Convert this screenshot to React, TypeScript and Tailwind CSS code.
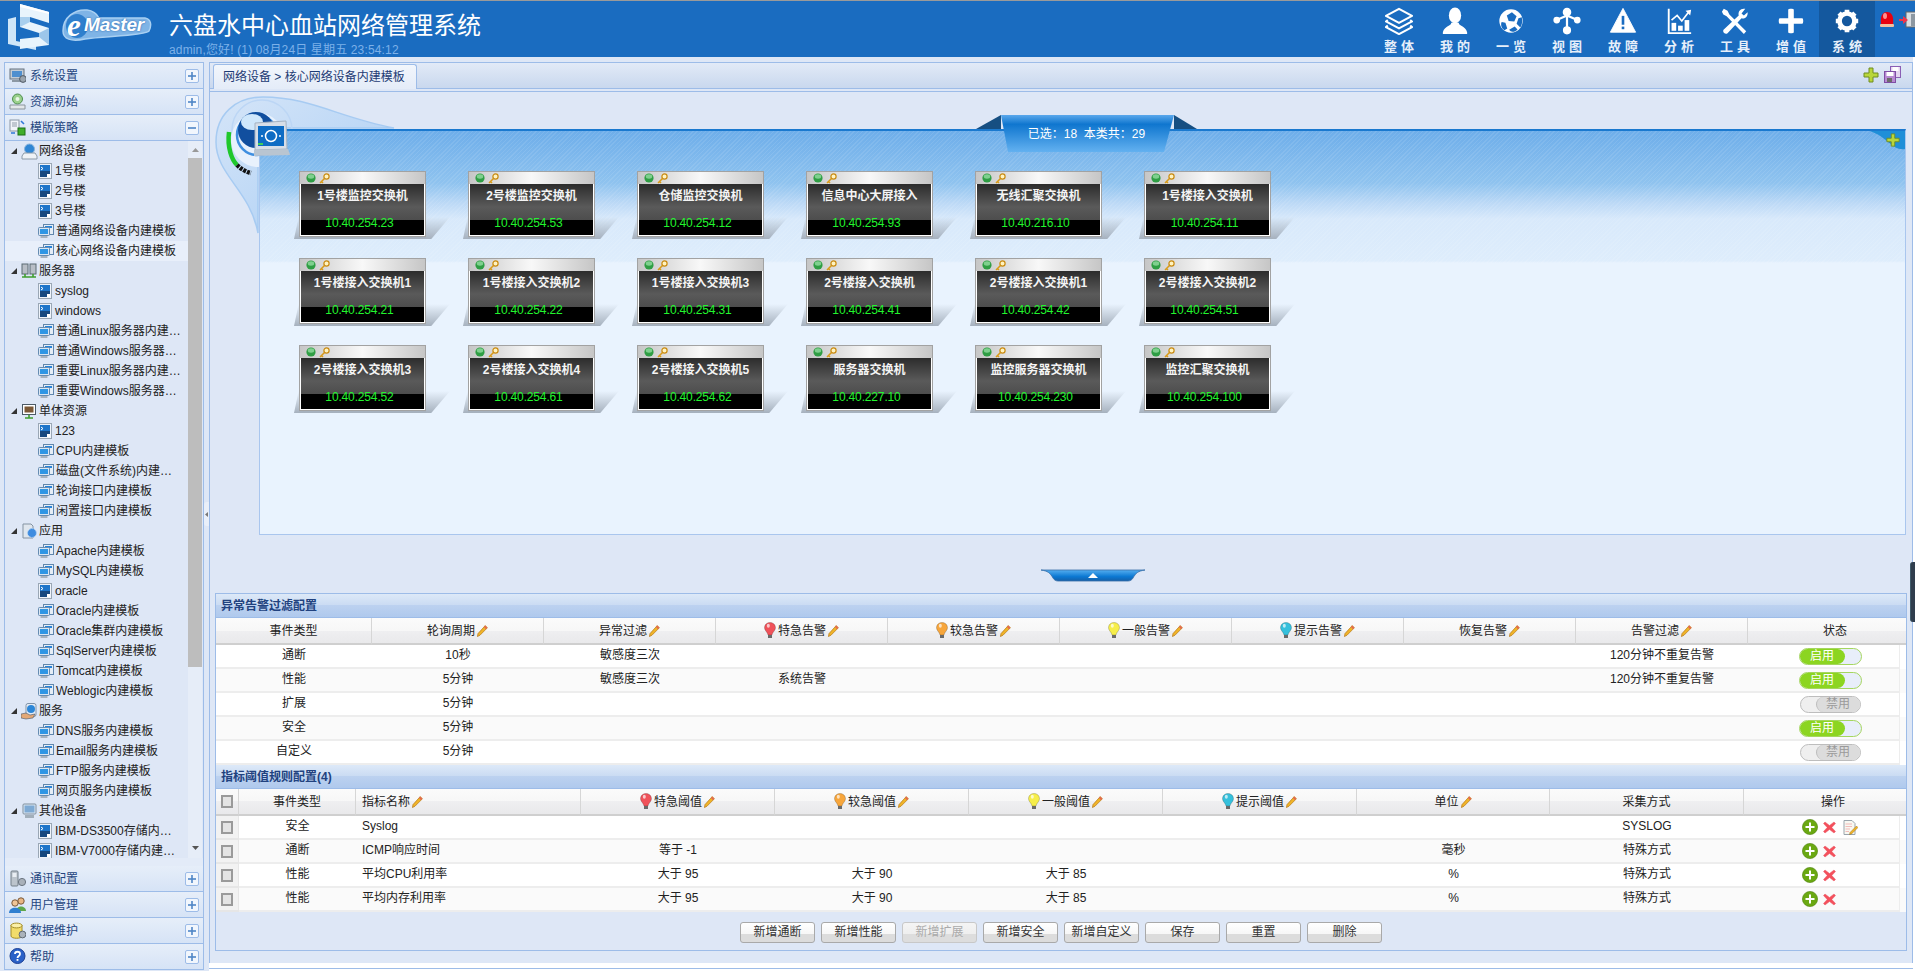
import React from "react";

const bd = "border-[#9dbce8]";

function Logo() {
  return (
    <svg width="44" height="48" viewBox="0 0 44 48" className="shrink-0">
      <path d="M0 16 L8 14 L8 38 L28 42 L28 47 L0 41 Z" fill="#cfe6f8" />
      <path d="M12 1 L41 9 L41 20 L22 14 L22 19 L41 25 L41 42 L12 46 L12 36 L31 34 L31 30 L12 24 Z" fill="#e8f4fc" />
      <path d="M12 1 L41 9 L41 11 L12 4 Z" fill="#ffffff" />
      <path d="M22 14 L22 19 L12 24 L12 14 Z" fill="#a8cfee" />
      <path d="M31 30 L41 25 L41 42 L31 34 Z" fill="#9cc6ea" />
    </svg>
  );
}

function EMaster() {
  return (
    <div className="relative w-[91px] h-[33px] ml-[9px] shrink-0 flex items-center">
      <svg width="91" height="33" viewBox="0 0 91 33" className="absolute left-0 top-0">
        <path d="M2 22 C2 8 14 0 26 1 C34 2 37 7 38 9 L84 9 C90 10 91 16 88 22 C84 27 40 27 24 30 C10 33 2 30 2 22 Z" fill="#7fb4e6" stroke="#a9d0f2" strokeWidth="1.5" />
        <ellipse cx="16" cy="17" rx="11" ry="12" fill="#2f7fcd" />
      </svg>
      <span className="relative font-['Liberation_Serif','Noto_Serif',serif] italic font-bold text-[31px] leading-[33px] text-white ml-[6px] w-[17px]">e</span>
      <span className="relative font-['Liberation_Sans',sans-serif] italic font-bold text-[19px] leading-[33px] text-white tracking-[-0.2px] mt-[-2px] [text-shadow:0_0_2px_#1d5fa8]">Master</span>
    </div>
  );
}

const navIcons: Record<string, React.ReactNode> = {
  layers: (
    <g fill="none" stroke="#fff" strokeWidth="2.2" strokeLinejoin="round">
      <path d="M15 2 L29 9.5 L15 17 L1 9.5 Z" />
      <path d="M3 14 L1 15.5 L15 23 L29 15.5 L27 14" />
      <path d="M3 20 L1 21.5 L15 29 L29 21.5 L27 20" />
    </g>
  ),
  user: (
    <g fill="#fff">
      <ellipse cx="15" cy="9" rx="6.6" ry="8.4" />
      <path d="M11 17 C11 21 4 20 2 27 L2 29 L28 29 L28 27 C26 20 19 21 19 17 Z" />
    </g>
  ),
  ball: (
    <g>
      <circle cx="15" cy="15" r="12.5" fill="#fff" />
      <g fill="#1a6cc0">
        <path d="M10.5 9 L16 5.5 L21 10 L18.5 15.5 L12.5 15 Z" />
        <path d="M5 16 L9 17 L11 23 L8 25 C5 23 3.5 19 5 16 Z" />
        <path d="M23 12 L26.5 11 C27.5 15 27 19 25 22 L21 18 Z" />
        <path d="M13 24.5 L19 21 L22 24 C19 27 15 27.5 13 24.5 Z" />
      </g>
    </g>
  ),
  graph: (
    <g stroke="#fff" strokeWidth="2.4" fill="#fff">
      <path d="M15 5 L15 26 M15 9 L4 14 M15 9 L26 14" fill="none" />
      <circle cx="15" cy="5.5" r="3.4" />
      <circle cx="15" cy="25" r="3.2" />
      <circle cx="4" cy="14" r="2.4" />
      <circle cx="26" cy="14" r="2.4" />
    </g>
  ),
  warn: (
    <g>
      <path d="M15 1.5 L28.5 27 L1.5 27 Z" fill="#fff" stroke="#fff" strokeLinejoin="round" />
      <rect x="13.6" y="9.5" width="2.8" height="9.5" fill="#1a6cc0" />
      <rect x="13.6" y="21" width="2.8" height="2.8" fill="#1a6cc0" />
    </g>
  ),
  chart: (
    <g fill="#fff">
      <path d="M3 2 L5 2 L5 27 L28 27 L28 29 L3 29 Z" />
      <rect x="7" y="17" width="5" height="8.5" />
      <rect x="14" y="20" width="5" height="5.5" />
      <rect x="21" y="14" width="5" height="11.5" />
      <path d="M7 14 L13 9 L18 15 L25 6" fill="none" stroke="#fff" strokeWidth="1.8" />
      <path d="M22 4 L28 3 L27 9 Z" />
    </g>
  ),
  tools: (
    <g fill="#fff">
      <path d="M3 2 L7 4 L9 8 L27 26 L24.5 29 L6 10 L2.5 8 L1 5 Z" />
      <path d="M26 2 C21 1 18 5 19 9 L3 24 C1 26 4 30 7 28 L22 12 C26 13 29 10 28.5 5.5 L24.5 9 L22 7 Z" />
    </g>
  ),
  plus: <path d="M12 3 C12 1.5 18 1.5 18 3 L18 12 L27 12 C28.5 12 28.5 18 27 18 L18 18 L18 27 C18 28.5 12 28.5 12 27 L12 18 L3 18 C1.5 18 1.5 12 3 12 L12 12 Z" fill="#fff" />,
  gear: (
    <g>
      <circle cx="15" cy="15" r="8" fill="none" stroke="#fff" strokeWidth="5" />
      <g stroke="#fff" strokeWidth="5">
        <path d="M15 3 L15 7 M15 23 L15 27 M3 15 L7 15 M23 15 L27 15 M6.5 6.5 L9.3 9.3 M20.7 20.7 L23.5 23.5 M6.5 23.5 L9.3 20.7 M20.7 9.3 L23.5 6.5" />
      </g>
    </g>
  ),
};

const nav = [
  ["layers", "整体"], ["user", "我的"], ["ball", "一览"], ["graph", "视图"], ["warn", "故障"],
  ["chart", "分析"], ["tools", "工具"], ["plus", "增值"], ["gear", "系统"],
];

function Header() {
  return (
    <header className="h-[57px] shrink-0 bg-[#1a6cc0] border-t border-[#9a9a9a] flex items-start overflow-hidden">
      <div className="pl-[8px] pt-[2px] flex items-start w-[1371px] shrink-0">
        <Logo />
        <div className="mt-[6px]"><EMaster /></div>
        <div className="ml-[17px] flex flex-col">
          <div className="text-[24px] leading-[30px] mt-[8px] text-white">六盘水中心血站网络管理系统</div>
          <div className="text-[12px] leading-[14px] mt-[2px] tracking-[0.15px] text-[#7db1e9] whitespace-nowrap">admin,您好! (1) 08月24日 星期五 23:54:12</div>
        </div>
      </div>
      {nav.map(([icon, label]) => (
        <div key={label} className={label === "系统" ? "w-[56px] h-[56px] shrink-0 flex flex-col items-center bg-[#14589e]" : "w-[56px] h-[56px] shrink-0 flex flex-col items-center"}>
          <svg width="28" height="28" viewBox="0 0 30 30" className="mt-[6px]">{navIcons[icon]}</svg>
          <span className="text-[13px] leading-[14px] mt-[5px] font-bold tracking-[4px] pl-[4px] text-[#e6effa] whitespace-nowrap">{label}</span>
        </div>
      ))}
      <div className="flex items-start pl-[4px] pt-[10px] shrink-0">
        <svg width="16" height="17" viewBox="0 0 16 17" className="shrink-0">
          <path d="M2 13 C1 4 4 1 8 1 C12 1 15 4 14 13 Z" fill="#e8000f" />
          <ellipse cx="6" cy="5" rx="2" ry="3" fill="#ff8f8f" />
          <rect x="1" y="13" width="14" height="3" rx="1" fill="#f3c0a0" />
        </svg>
        <svg width="22" height="17" viewBox="0 0 22 17" className="ml-[3px] shrink-0">
          <rect x="8" y="1" width="13" height="15" fill="#d8dde2" stroke="#666" />
          <rect x="13" y="3" width="5" height="12" fill="#8d98a2" />
          <path d="M1 8 L5 8 L5 5 L10 9 L5 13 L5 10 L1 10 Z" fill="#f0344a" />
        </svg>
      </div>
    </header>
  );
}

function Template() {
  return (
    <svg width="14" height="16" viewBox="0 0 14 16" className="shrink-0">
      <rect x="0.5" y="0.5" width="13" height="15" fill="#eef3fa" stroke="#9aa7b5" />
      <rect x="2" y="2" width="10" height="12" fill="#1d74c9" />
      <rect x="2" y="8" width="10" height="6" fill="#16487f" />
      <path d="M3 4 L5 5.5 L3 7" stroke="#fff" fill="none" />
      <rect x="9" y="11" width="3" height="3" fill="#fff" />
    </svg>
  );
}

function Monitor() {
  return (
    <svg width="16" height="15" viewBox="0 0 16 15" className="shrink-0">
      <rect x="5.5" y="0.5" width="10" height="10" fill="#e5edf6" stroke="#5f86ad" />
      <rect x="7" y="2" width="7" height="2" fill="#2a83d8" />
      <rect x="0.5" y="3.5" width="11" height="8" rx="1" fill="#dbe6f2" stroke="#668cb2" />
      <rect x="2" y="5" width="8" height="5" fill="#2f96e4" />
      <rect x="2.5" y="12" width="7" height="2" fill="#a7b3bf" />
    </svg>
  );
}

const groupIcons: Record<string, React.ReactNode> = {
  net: (
    <g>
      <circle cx="8.5" cy="6" r="5" fill="#2f86d4" stroke="#88b3dc" />
      <path d="M1 13 L3 10 L14 10 L16 13 L16 16 L1 16 Z" fill="#eef2f6" stroke="#8a9aa8" />
    </g>
  ),
  server: (
    <g>
      <rect x="1" y="1" width="6" height="10" fill="#b8bec6" stroke="#5a6a72" />
      <rect x="9" y="1" width="6" height="10" fill="#b8bec6" stroke="#5a6a72" />
      <path d="M4 11 L4 14 M12 11 L12 14 M1 14 L15 14" stroke="#3f9f2f" strokeWidth="1.6" />
    </g>
  ),
  single: (
    <g>
      <rect x="1.5" y="1.5" width="13" height="10" fill="#fff" stroke="#4c5a66" />
      <rect x="3.5" y="3.5" width="9" height="6" fill="#7b5836" />
      <path d="M8 12 L8 15 M4 15 L12 15" stroke="#3f9f2f" strokeWidth="1.6" />
    </g>
  ),
  app: (
    <g>
      <path d="M2 1 L10 1 L12 3 L12 15 L2 15 Z" fill="#dfe6ee" stroke="#8593a2" />
      <circle cx="11" cy="10" r="4.4" fill="#3f8ce0" stroke="#a6cdf4" strokeDasharray="1.5 1" />
    </g>
  ),
  service: (
    <g>
      <rect x="5" y="0.5" width="10" height="13" rx="2" fill="#e5ecf5" stroke="#8093a8" />
      <circle cx="10" cy="6" r="4" fill="#2c87d8" />
      <path d="M0 11 L5 10 L9 12 L14 11 L12 15 L5 16 L0 15 Z" fill="#e3a876" stroke="#27405f" strokeWidth="0.5" />
    </g>
  ),
  other: (
    <g>
      <rect x="2" y="1" width="13" height="10" rx="1" fill="#dbe6f2" stroke="#7f8f9e" />
      <rect x="3.5" y="2.5" width="10" height="7" fill="#7eaad4" />
      <rect x="4" y="12" width="9" height="3" fill="#a2afbb" />
    </g>
  ),
};

type TreeItem = [string, "g" | "t" | "m", string?];
const tree: TreeItem[] = [
  ["网络设备", "g", "net"], ["1号楼", "t"], ["2号楼", "t"], ["3号楼", "t"], ["普通网络设备内建模板", "m"], ["核心网络设备内建模板", "m"],
  ["服务器", "g", "server"], ["syslog", "t"], ["windows", "t"], ["普通Linux服务器内建…", "m"], ["普通Windows服务器…", "m"], ["重要Linux服务器内建…", "m"], ["重要Windows服务器…", "m"],
  ["单体资源", "g", "single"], ["123", "t"], ["CPU内建模板", "m"], ["磁盘(文件系统)内建…", "m"], ["轮询接口内建模板", "m"], ["闲置接口内建模板", "m"],
  ["应用", "g", "app"], ["Apache内建模板", "m"], ["MySQL内建模板", "m"], ["oracle", "t"], ["Oracle内建模板", "m"], ["Oracle集群内建模板", "m"], ["SqlServer内建模板", "m"], ["Tomcat内建模板", "m"], ["Weblogic内建模板", "m"],
  ["服务", "g", "service"], ["DNS服务内建模板", "m"], ["Email服务内建模板", "m"], ["FTP服务内建模板", "m"], ["网页服务内建模板", "m"],
  ["其他设备", "g", "other"], ["IBM-DS3500存储内…", "t"], ["IBM-V7000存储内建…", "t"],
];

const accIcons: Record<string, React.ReactNode> = {
  sys: (<g><rect x="1" y="2" width="14" height="10" fill="#c3ccd6" stroke="#66727e" /><rect x="3" y="4" width="10" height="6" fill="#4f8fcf" /><rect x="3" y="13" width="10" height="2" fill="#8c98a4" /><circle cx="14" cy="12" r="3.4" fill="#9aa4ae" stroke="#4f5a66" /></g>),
  init: (<g><circle cx="8.5" cy="6" r="5" fill="#9ad08c" stroke="#4f8f4f" /><circle cx="8.5" cy="6" r="2" fill="#eaf6e6" /><path d="M1 12 L16 12 L16 16 L1 16 Z" fill="#e3e7ea" stroke="#8a949c" /></g>),
  tpl: (<g><rect x="1" y="1" width="9" height="11" fill="#f1f4f8" stroke="#8b98a5" /><rect x="3" y="3" width="5" height="5" fill="#c1c8d0" /><rect x="9" y="9" width="7" height="7" fill="#3fae2a" stroke="#1c6f17" /><path d="M2 14 L6 14 M12 2 L15 5" stroke="#2f78d8" strokeWidth="1.6" /></g>),
  comm: (<g><rect x="2" y="1" width="7" height="15" rx="1" fill="#bcc4cc" stroke="#75808a" /><rect x="3.5" y="3" width="4" height="4" fill="#e9eef3" /><circle cx="13" cy="12" r="3.6" fill="#a9b1ba" stroke="#6b7580" /></g>),
  user: (<g><circle cx="12" cy="5" r="3.2" fill="#e8b683" stroke="#7b5a3a" /><path d="M7 15 C7 9 17 9 17 15 Z" fill="#5ea84a" /><circle cx="6" cy="7" r="3.2" fill="#f0c596" stroke="#7b5a3a" /><path d="M0 17 C0 10 12 10 12 17 Z" fill="#2f7fd0" /></g>),
  data: (<g><path d="M2 3 L2 14 C2 17 13 17 13 14 L13 3 Z" fill="#f2dc6a" stroke="#a48e2a" /><ellipse cx="7.5" cy="3.5" rx="5.5" ry="2.4" fill="#fbf0a8" stroke="#a48e2a" /><circle cx="13.5" cy="12.5" r="3.4" fill="#aab2ba" stroke="#626c76" /></g>),
  help: (<g><circle cx="8.5" cy="8" r="7.5" fill="#2a61c8" stroke="#1b3f93" /><path d="M6 6 C6 3 11 3 11 6 C11 8 8.5 8 8.5 10" stroke="#fff" strokeWidth="1.8" fill="none" /><rect x="7.6" y="11" width="1.8" height="1.8" fill="#fff" /></g>),
};

function AccBtn({ minus }: { minus?: boolean }) {
  return (
    <div className={"w-[14px] h-[14px] rounded-[2px] border " + bd + " bg-[#f1f6fd] flex items-center justify-center"}>
      <svg width="8" height="8" viewBox="0 0 8 8">
        <rect x="0" y="3.2" width="8" height="1.6" fill="#4f86c6" />
        {!minus && <rect x="3.2" y="0" width="1.6" height="8" fill="#4f86c6" />}
      </svg>
    </div>
  );
}

function AccHead({ icon, label, minus }: { icon: string; label: string; minus?: boolean }) {
  return (
    <div className={"h-[26px] shrink-0 flex items-center pl-[4px] pr-[4px] border-b " + bd + " bg-[linear-gradient(#e6eef9,#d6e3f6)]"}>
      <svg width="17" height="17" viewBox="0 0 17 17" className="shrink-0">{accIcons[icon]}</svg>
      <span className="ml-[4px] text-[12px] text-[#254680] flex-1">{label}</span>
      <AccBtn minus={minus} />
    </div>
  );
}

function Sidebar() {
  return (
    <aside className="w-[200px] ml-[4px] mt-[5px] h-[907px] shrink-0 flex flex-col">
      <div className={"border-x border-t " + bd + " flex flex-col"}>
        <AccHead icon="sys" label="系统设置" />
        <AccHead icon="init" label="资源初始" />
        <AccHead icon="tpl" label="模版策略" minus />
      </div>
      <div className={"h-[717px] shrink-0 border-x " + bd + " flex overflow-hidden"}>
        <div className="w-[183px] shrink-0">
          {tree.map(([name, kind, g]) => (
            <div key={name} className={name === "核心网络设备内建模板" ? "h-[20px] flex items-center bg-[#e8effa] pl-[33px]" : kind === "g" ? "h-[20px] flex items-center pl-[6px]" : "h-[20px] flex items-center pl-[33px]"}>
              {kind === "g" && (
                <>
                  <svg width="6" height="6" viewBox="0 0 6 6" className="shrink-0"><path d="M6 0 L6 6 L0 6 Z" fill="#333" /></svg>
                  <svg width="17" height="17" viewBox="0 0 17 17" className="ml-[4px] shrink-0">{groupIcons[g as string]}</svg>
                </>
              )}
              {kind === "t" && <Template />}
              {kind === "m" && <Monitor />}
              <span className={kind === "g" ? "ml-[1px] text-[12px] text-[#222] whitespace-nowrap" : kind === "t" ? "ml-[3px] text-[12px] text-[#222] whitespace-nowrap" : "ml-[2px] text-[12px] text-[#222] whitespace-nowrap"}>{name}</span>
            </div>
          ))}
        </div>
        <div className="w-[14px] shrink-0 flex flex-col bg-[#e6edf8]">
          <div className="h-[17px] flex items-center justify-center">
            <svg width="7" height="4" viewBox="0 0 7 4"><path d="M0 4 L3.5 0 L7 4 Z" fill="#999" /></svg>
          </div>
          <div className="h-[509px] bg-[#bdbdbd]" />
          <div className="flex-1 flex items-end justify-center pb-[8px]">
            <svg width="7" height="4" viewBox="0 0 7 4"><path d="M0 0 L3.5 4 L7 0 Z" fill="#555" /></svg>
          </div>
        </div>
      </div>
      <div className={"h-[8px] shrink-0 border-x " + bd + " bg-[#e3ebf8]"} />
      <div className={"border-x " + bd + " flex flex-col"}>
        <AccHead icon="comm" label="通讯配置" />
        <AccHead icon="user" label="用户管理" />
        <AccHead icon="data" label="数据维护" />
        <AccHead icon="help" label="帮助" />
      </div>
    </aside>
  );
}

function Dot() {
  return (
    <svg width="10" height="10" viewBox="0 0 10 10" className="shrink-0">
      <circle cx="5" cy="5" r="4.6" fill="#2f9e44" />
      <ellipse cx="5" cy="3.5" rx="3.2" ry="2.2" fill="#7fd08e" />
    </svg>
  );
}

function Key() {
  return (
    <svg width="11" height="11" viewBox="0 0 11 11" className="shrink-0 ml-[3px]">
      <circle cx="7.5" cy="3.5" r="2.6" fill="#fff3c0" stroke="#c98a10" strokeWidth="1.2" />
      <path d="M5.5 5.5 L1 10 M2.5 8.5 L4 10" stroke="#d89a18" strokeWidth="1.5" />
    </svg>
  );
}

const devices = [
  ["1号楼监控交换机", "10.40.254.23"], ["2号楼监控交换机", "10.40.254.53"], ["仓储监控交换机", "10.40.254.12"], ["信息中心大屏接入", "10.40.254.93"], ["无线汇聚交换机", "10.40.216.10"], ["1号楼接入交换机", "10.40.254.11"],
  ["1号楼接入交换机1", "10.40.254.21"], ["1号楼接入交换机2", "10.40.254.22"], ["1号楼接入交换机3", "10.40.254.31"], ["2号楼接入交换机", "10.40.254.41"], ["2号楼接入交换机1", "10.40.254.42"], ["2号楼接入交换机2", "10.40.254.51"],
  ["2号楼接入交换机3", "10.40.254.52"], ["2号楼接入交换机4", "10.40.254.61"], ["2号楼接入交换机5", "10.40.254.62"], ["服务器交换机", "10.40.227.10"], ["监控服务器交换机", "10.40.254.230"], ["监控汇聚交换机", "10.40.254.100"],
];

function Card({ name, ip }: { name: string; ip: string }) {
  return (
    <div className="relative w-[127px] h-[68px]">
      <div className="absolute left-[-5px] right-[-24px] top-[46px] bottom-0 bg-[linear-gradient(to_bottom,rgba(150,165,185,0),#a6b1be)] [clip-path:polygon(0_100%,3%_0,100%_0,88%_100%)]" />
      <div className="relative h-[66px] border border-[#a2a2a2] bg-white flex flex-col">
        <div className="h-[12px] shrink-0 bg-[linear-gradient(to_right,#c6c6c6,#f8f8f8_50%,#c6c6c6)] flex items-center pl-[6px]">
          <Dot />
          <Key />
        </div>
        <div className="mx-[1px] h-[51px] shrink-0 bg-[linear-gradient(#2c2c2c,#5a5a5a_45%,#3e3e3e)] flex flex-col items-center">
          <div className="h-[36px] w-full shrink-0 pt-[4px] text-center text-[12px] leading-[16px] font-bold text-[#f4f4f4]">{name}</div>
          <div className="h-[15px] w-full shrink-0 bg-[#000] text-center">
            <span className="block -mt-[3px] pr-[6px] text-[12px] leading-[12px] tracking-[-0.15px] text-[#22f52e]">{ip}</span>
          </div>
        </div>
      </div>
      <div className="h-[2px] bg-[#a9b0b8]" />
    </div>
  );
}

function Swoosh() {
  return (
    <svg width="190" height="145" viewBox="215 95 190 145" className="absolute left-[6px] top-[38px]">
      <defs>
        <linearGradient id="sw" x1="0" y1="0" x2="1" y2="1">
          <stop offset="0" stopColor="#d5e5f8" />
          <stop offset="1" stopColor="#a9cdf4" />
        </linearGradient>
      </defs>
      <path d="M394 128 C 340 118, 310 97, 263 97 C 235 97, 216 115, 216 142 C 216 175, 250 190, 258 233 L 258 128 Z" fill="url(#sw)" stroke="#a7cbf2" strokeWidth="1.5" />
      <circle cx="262" cy="130" r="30" fill="none" stroke="#bcd6f5" strokeWidth="1.5" />
      <circle cx="258" cy="140" r="27" fill="#e8f1fc" />
    </svg>
  );
}

function Globe() {
  return (
    <svg width="85" height="85" viewBox="215 100 85 85" className="absolute left-[6px] top-[43px]">
      <circle cx="257" cy="135" r="20" fill="none" stroke="#3f8fe0" strokeWidth="2.5" />
      <circle cx="256" cy="130" r="18" fill="#114f9f" />
      <ellipse cx="252" cy="122" rx="11" ry="8" fill="#cfe7fb" />
      <path d="M229 132 C 227 148, 232 160, 237 165" stroke="#1fc82c" strokeWidth="4.5" fill="none" />
      <path d="M237 165 C 241 169, 246 172, 251 173" stroke="#111" strokeWidth="4.5" fill="none" strokeDasharray="3 1" />
      <g>
        <path d="M255 123 L286 121 L287 149 L255 150 Z" fill="#d6dee8" stroke="#a3b2c2" />
        <rect x="258" y="126" width="26" height="20" fill="#0e6cc4" />
        <circle cx="271" cy="136" r="5.5" fill="none" stroke="#fff" strokeWidth="1.5" />
        <circle cx="262" cy="136" r="1" fill="#fff" />
        <circle cx="280" cy="136" r="1" fill="#fff" />
        <rect x="258" y="143" width="5" height="2" fill="#3fcf5a" />
        <path d="M254 150 L288 149 L290 155 L254 156 Z" fill="#b9c5d1" />
      </g>
    </svg>
  );
}

function GreenPlus({ size = 14 }: { size?: number }) {
  return (
    <svg width={size} height={size} viewBox="0 0 16 16" className="shrink-0">
      <path d="M6 1 L10 1 L10 6 L15 6 L15 10 L10 10 L10 15 L6 15 L6 10 L1 10 L1 6 L6 6 Z" fill="#b9d63a" stroke="#6e8c22" strokeWidth="1" />
    </svg>
  );
}

function Canvas() {
  return (
    <div className="relative ml-[49px] mr-[6px] mt-[37px] h-[406px] border border-[#a9c6ee] border-t-2 border-t-[#1a79cf] bg-[repeating-linear-gradient(135deg,rgba(255,255,255,0.09)_0_1px,transparent_1px_3px),linear-gradient(#6eaeea_0,#8fc3ef_52px,#bcd9f6_72px,#d8e9fb_88px,#deedfc_130px,#e9f3fe_132px,#e9f3fe_100%)] bg-no-repeat [background-size:100%_132px,100%_100%]">
      <div className="absolute left-[716px] top-[-16px] w-[221px] h-[38px]">
        <svg width="221" height="38" viewBox="0 0 221 38" className="absolute left-0 top-0">
          <defs>
            <linearGradient id="bn" x1="0" y1="0" x2="0" y2="1">
              <stop offset="0" stopColor="#5aa8ec" />
              <stop offset="0.25" stopColor="#0f76cf" />
              <stop offset="1" stopColor="#63b1f0" />
            </linearGradient>
          </defs>
          <path d="M0 14 L25 0 L25 14 Z" fill="#164f82" />
          <path d="M221 14 L198 0 L198 14 Z" fill="#164f82" />
          <path d="M25 0 L198 0 L188 37 L32 37 Z" fill="url(#bn)" />
        </svg>
        <div className="absolute left-[0px] top-[11px] w-[221px] text-center text-[12px] leading-[16px] text-white">已选：18 &nbsp;本类共：29</div>
      </div>
      <svg width="35" height="19" viewBox="0 0 35 19" className="absolute right-0 top-0">
        <path d="M0 0 L35 0 L35 18 C22 20 18 6 0 0 Z" fill="#1f8fd8" />
      </svg>
      <div className="absolute right-[5px] top-[2px]"><GreenPlus /></div>
      <div className="pl-[39px] pt-[40px] grid grid-cols-[repeat(6,127px)] gap-x-[42px] gap-y-[19px]">
        {devices.map(([n, ip]) => <Card key={ip} name={n} ip={ip} />)}
      </div>
    </div>
  );
}

function Pencil() {
  return (
    <svg width="11" height="12" viewBox="0 0 11 12" className="shrink-0">
      <path d="M8.2 0.6 L10.4 2.8 L3 10.2 L0.4 11.6 L1 8.6 Z" fill="#f0b429" stroke="#b6781a" strokeWidth="0.7" />
      <path d="M8.2 0.6 L10.4 2.8 L9 4.2 L6.9 2 Z" fill="#e36a50" />
    </svg>
  );
}

function Bulb({ c }: { c: string }) {
  return (
    <svg width="12" height="17" viewBox="0 0 12 17" className="shrink-0">
      <path d="M6 0.5 C9.5 0.5 11.5 3 11.5 5.7 C11.5 8.6 8.5 10 8 13 L4 13 C3.5 10 0.5 8.6 0.5 5.7 C0.5 3 2.5 0.5 6 0.5 Z" fill={c} stroke="#00000030" />
      <ellipse cx="4.3" cy="3.8" rx="1.5" ry="2" fill="#ffffffb0" />
      <rect x="4" y="13" width="4" height="3" fill="#6a6a6a" />
    </svg>
  );
}

const headCell = "h-[27px] flex items-center justify-center gap-[2px] border-r border-[#d6d6d6] border-b-2 border-b-[#cfcfcf] bg-[linear-gradient(#fbfbfb_0,#f7f7f7_50%,#efeff1_50%,#e9e9eb_100%)] text-[12px] text-[#222] whitespace-nowrap";
const rowCell = "h-[24px] flex items-center justify-center pb-[3px] border-b-2 border-[#ededed] text-[12px] text-[#222] whitespace-nowrap";

function SectionTitle({ children }: { children: React.ReactNode }) {
  return (
    <div className={"h-[24px] border-b " + bd + " flex items-center pl-[5px] text-[12px] font-bold text-[#21427f] bg-[linear-gradient(#dde9f8_0,#cbdcf3_46%,#bdd2f0_46%,#afc9ed_100%)]"}>
      {children}
    </div>
  );
}

function Toggle({ on }: { on: boolean }) {
  if (on) {
    return (
      <div className="w-[63px] h-[17px] ml-[13px] rounded-full border border-[#a5d65f] bg-[#e8eefa] flex">
        <div className="w-[45px] rounded-full bg-[#8cd521] text-white text-[12px] leading-[15px] text-center">启用</div>
      </div>
    );
  }
  return (
    <div className="w-[61px] h-[17px] ml-[13px] rounded-full border border-[#bdbdbd] bg-[#efefef] flex justify-end">
      <div className="w-[44px] rounded-full bg-[#dcdcdc] border-l border-[#bdbdbd] text-[#9a9a9a] text-[12px] leading-[15px] text-center">禁用</div>
    </div>
  );
}

const heads1: [string, string | null][] = [
  ["轮询周期", null], ["异常过滤", null], ["特急告警", "#f0525a"], ["较急告警", "#f7a63c"], ["一般告警", "#f6ee4a"], ["提示告警", "#35c0dc"], ["恢复告警", null], ["告警过滤", null],
];
const rows1: [string, string, string, string, string, boolean][] = [
  ["通断", "10秒", "敏感度三次", "", "120分钟不重复告警", true],
  ["性能", "5分钟", "敏感度三次", "系统告警", "120分钟不重复告警", true],
  ["扩展", "5分钟", "", "", "", false],
  ["安全", "5分钟", "", "", "", true],
  ["自定义", "5分钟", "", "", "", false],
];

function Table1() {
  return (
    <div className="bg-white">
      <div className="grid grid-cols-[156px_repeat(8,172px)_158px]">
        <div className={headCell}>事件类型</div>
        {heads1.map(([t, c]) => (
          <div key={t} className={headCell}>
            {c && <Bulb c={c} />}
            <span>{t}</span>
            <Pencil />
          </div>
        ))}
        <div className={headCell + " pl-[16px] border-r-0"}>状态</div>
      </div>
      {rows1.map((r, i) => (
        <div key={r[0]} className={i % 2 ? "grid grid-cols-[156px_repeat(8,172px)_152px] bg-[#fafafa]" : "grid grid-cols-[156px_repeat(8,172px)_152px] bg-white"}>
          <div className={rowCell}>{r[0]}</div>
          <div className={rowCell}>{r[1]}</div>
          <div className={rowCell}>{r[2]}</div>
          <div className={rowCell}>{r[3]}</div>
          <div className={rowCell} />
          <div className={rowCell} />
          <div className={rowCell} />
          <div className={rowCell} />
          <div className={rowCell}>{r[4]}</div>
          <div className="h-[24px] flex items-center justify-center border-b-2 border-r border-[#ededed]"><Toggle on={r[5]} /></div>
        </div>
      ))}
    </div>
  );
}

function Check() {
  return <div className="w-[12px] h-[13px] border-2 border-[#9a9a9a] bg-[#e4e4e4]" />;
}

function PlusRound() {
  return (
    <svg width="16" height="16" viewBox="0 0 16 16" className="shrink-0">
      <circle cx="8" cy="8" r="7.6" fill="#6aa812" stroke="#4e820a" strokeWidth="0.6" />
      <path d="M7 3.5 L9 3.5 L9 7 L12.5 7 L12.5 9 L9 9 L9 12.5 L7 12.5 L7 9 L3.5 9 L3.5 7 L7 7 Z" fill="#fff" />
    </svg>
  );
}

function RedX() {
  return (
    <svg width="13" height="13" viewBox="0 0 13 13" className="shrink-0">
      <path d="M2 1 L6.5 4.5 L11 1 L12.5 2.5 L8.8 6.5 L12.5 10.5 L11 12 L6.5 8.5 L2 12 L0.5 10.5 L4.2 6.5 L0.5 2.5 Z" fill="#f4505c" stroke="#e85a66" strokeWidth="0.5" />
    </svg>
  );
}

function EditDoc() {
  return (
    <svg width="15" height="15" viewBox="0 0 15 15" className="shrink-0">
      <path d="M1 0.5 L9 0.5 L12 3.5 L12 14.5 L1 14.5 Z" fill="#f8f8f2" stroke="#9aa4ac" />
      <path d="M2.5 4 L9 4 M2.5 6.5 L9 6.5 M2.5 9 L7 9 M2.5 11.5 L6 11.5" stroke="#f0a0a0" strokeWidth="0.7" />
      <path d="M13.5 6 L15 7.5 L8.5 14 L6.5 14.5 L7 12.5 Z" fill="#f0b429" stroke="#8a5a10" strokeWidth="0.4" />
    </svg>
  );
}

const rows2: [string, string, string, string, string, string, string][] = [
  ["安全", "Syslog", "", "", "", "", "SYSLOG"],
  ["通断", "ICMP响应时间", "等于 -1", "", "", "毫秒", "特殊方式"],
  ["性能", "平均CPU利用率", "大于 95", "大于 90", "大于 85", "%", "特殊方式"],
  ["性能", "平均内存利用率", "大于 95", "大于 90", "大于 85", "%", "特殊方式"],
];

const heads2: [string, string][] = [["特急阈值", "#f0525a"], ["较急阈值", "#f7a63c"], ["一般阈值", "#f6ee4a"], ["提示阈值", "#35c0dc"]];

function Table2() {
  return (
    <div className="bg-white">
      <div className="grid grid-cols-[23px_117px_225px_194px_194px_194px_194px_193px_194px_162px]">
        <div className={headCell}><Check /></div>
        <div className={headCell}>事件类型</div>
        <div className={headCell + " justify-start pl-[6px]"}><span>指标名称</span><Pencil /></div>
        {heads2.map(([t, c]) => (
          <div key={t} className={headCell}><Bulb c={c} /><span>{t}</span><Pencil /></div>
        ))}
        <div className={headCell}><span>单位</span><Pencil /></div>
        <div className={headCell}>采集方式</div>
        <div className={headCell + " pl-[16px] border-r-0"}>操作</div>
      </div>
      {rows2.map((r, i) => (
        <div key={r[1]} className={i % 2 ? "grid grid-cols-[23px_117px_225px_194px_194px_194px_194px_193px_194px_156px] bg-[#fafafa]" : "grid grid-cols-[23px_117px_225px_194px_194px_194px_194px_193px_194px_156px] bg-white"}>
          <div className="h-[24px] flex items-center justify-center border-b-2 border-r border-[#e6e6e6] bg-[#f2f2f2]"><Check /></div>
          <div className={rowCell}>{r[0]}</div>
          <div className={rowCell + " justify-start pl-[6px]"}>{r[1]}</div>
          <div className={rowCell}>{r[2]}</div>
          <div className={rowCell}>{r[3]}</div>
          <div className={rowCell}>{r[4]}</div>
          <div className={rowCell} />
          <div className={rowCell}>{r[5]}</div>
          <div className={rowCell}>{r[6]}</div>
          <div className="h-[24px] flex items-center pl-[58px] gap-[5px] border-b-2 border-r border-[#ededed]">
            <PlusRound />
            <RedX />
            {i === 0 && <div className="ml-[2px] flex"><EditDoc /></div>}
          </div>
        </div>
      ))}
    </div>
  );
}

const buttons: [string, boolean][] = [["新增通断", false], ["新增性能", false], ["新增扩展", true], ["新增安全", false], ["新增自定义", false], ["保存", false], ["重置", false], ["删除", false]];

function Main() {
  return (
    <main className="relative flex-1 flex flex-col h-[914px] pr-[2px]">
      <div className="h-[906px] bg-[#dee7f6] flex flex-col pt-[5px]">
        <div className={"h-[27px] shrink-0 border-x border-t border-b " + bd + " bg-[linear-gradient(#e2eaf7,#c9d8ee)] flex items-end pl-[3px] pr-[11px] justify-between"}>
          <div className={"h-[25px] w-[204px] mb-[-1px] border-x border-t rounded-t-[3px] " + bd + " bg-[linear-gradient(#f2f6fc,#e4ecf8)] flex items-center pl-[9px] text-[12px] text-[#1d3b74] whitespace-nowrap"}>
            网络设备&nbsp;&gt;&nbsp;核心网络设备内建模板
          </div>
          <div className="flex items-center gap-[5px] pb-[5px]">
            <GreenPlus size={16} />
            <svg width="17" height="17" viewBox="0 0 17 17">
              <rect x="6.5" y="0.5" width="10" height="11" fill="#e4d6f0" stroke="#8a5fb4" />
              <rect x="8.5" y="1" width="6" height="4" fill="#fff" />
              <rect x="0.5" y="5.5" width="11" height="11" fill="#b88ad2" stroke="#7f4ea5" />
              <rect x="2.5" y="6" width="7" height="4" fill="#fff" />
              <rect x="3" y="12" width="5" height="4" fill="#6c6c6c" />
            </svg>
          </div>
        </div>
        <div className={"h-[3px] shrink-0 border-b " + bd + " border-x"} />
        <div className={"relative flex-1 border-x " + bd + " flex flex-col"}>
          <div className="absolute left-[-1px] top-[-35px] h-0"><div className="relative"><Swoosh /></div></div>
          <Canvas />
          <div className="absolute left-[-1px] top-[-35px] h-0 z-10"><div className="relative"><Globe /></div></div>
          <svg width="106" height="13" viewBox="0 0 106 13" className="ml-[830px] mt-[34px] shrink-0">
            <defs>
              <linearGradient id="hd" x1="0" y1="0" x2="0" y2="1">
                <stop offset="0" stopColor="#55aef0" />
                <stop offset="0.6" stopColor="#0b78d2" />
                <stop offset="1" stopColor="#1560a8" />
              </linearGradient>
            </defs>
            <path d="M1 1 L105 1 C98 2 96 4 93 9 C92 11 90 12 88 12 L18 12 C16 12 14 11 13 9 C10 4 8 2 1 1 Z" fill="url(#hd)" stroke="#396ea8" strokeWidth="0.8" />
            <path d="M48 9 L53 4 L58 9 Z" fill="#fff" />
          </svg>
          <div className={"ml-[5px] mr-[5px] mt-[11px] h-[358px] border " + bd + " flex flex-col"}>
            <SectionTitle>异常告警过滤配置</SectionTitle>
            <Table1 />
            <SectionTitle>指标阈值规则配置(4)</SectionTitle>
            <Table2 />
            <div className="flex justify-center gap-[6px] mt-[10px]">
              {buttons.map(([b, dis]) => (
                <div key={b} className={dis ? "w-[75px] h-[21px] rounded-[3px] border border-[#c8c8c8] bg-[linear-gradient(#f4f4f4_0,#eeeeee_60%,#dddddd_60%,#dddddd_100%)] text-[12px] leading-[19px] text-center text-[#aaaaaa]" : "w-[75px] h-[21px] rounded-[3px] border border-[#a9a9a9] bg-[linear-gradient(#ffffff_0,#f6f6f6_60%,#dcdcdc_60%,#dcdcdc_100%)] text-[12px] leading-[19px] text-center text-[#333]"}>{b}</div>
              ))}
            </div>
          </div>
        </div>
      </div>
      <div className={"h-[6px] border-b " + bd} />
      <div className="absolute right-0 top-[505px] w-[5px] h-[60px] rounded-l-[3px] bg-[#2f3d4d] border-l border-[#3f5a6a]" />
    </main>
  );
}

export default function App() {
  return (
    <div className="w-[1915px] h-[971px] overflow-hidden bg-white flex flex-col font-['Liberation_Sans','Noto_Sans_CJK_SC',sans-serif] text-[12px]">
      <Header />
      <div className="flex h-[914px]">
        <div className="flex bg-[#dee7f6] h-[914px] shrink-0">
          <Sidebar />
          <div className="w-[5px] flex items-center">
            <div className="w-[5px] h-[24px] rounded-l-[3px] bg-[#e9eff9] flex items-center justify-center">
              <svg width="3" height="5" viewBox="0 0 3 5"><path d="M3 0 L3 5 L0 2.5 Z" fill="#777" /></svg>
            </div>
          </div>
        </div>
        <Main />
      </div>
    </div>
  );
}
